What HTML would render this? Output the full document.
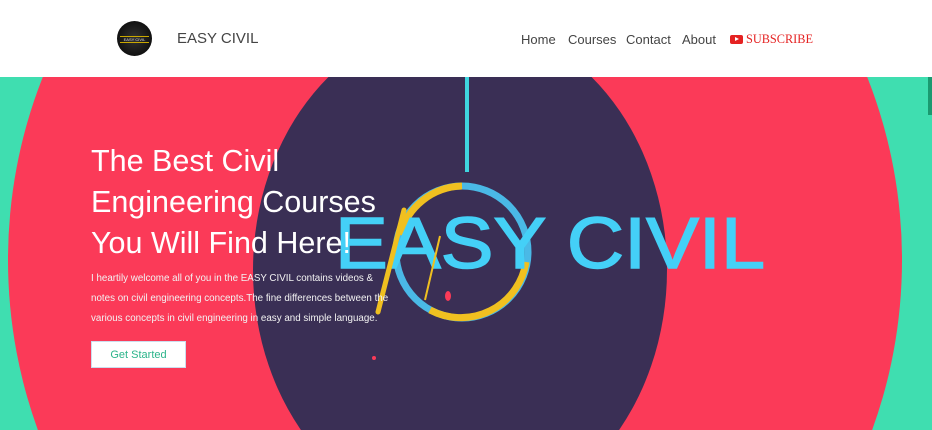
<!DOCTYPE html>
<html style="overflow:hidden"><head><style>
*{margin:0;padding:0;box-sizing:border-box}
html,body{width:932px;height:430px;overflow:hidden}
body{position:relative;background:#3fdeb0;font-family:"Liberation Sans",sans-serif}
.hdr{position:absolute;left:0;top:0;width:932px;height:77px;background:#fff;z-index:5}
.logo{position:absolute;left:117px;top:21px;width:35px;height:35px;border-radius:50%;background:radial-gradient(circle,#333 0,#111 70%);}
.logo span{position:absolute;left:3px;top:15px;font-size:4px;color:#ddd;width:29px;text-align:center;border-top:1px solid #c9a800;border-bottom:1px solid #c9a800}
.brand{position:absolute;left:177px;top:30px;font-size:15px;color:#444}
.nav{position:absolute;top:32px;font-size:13px;color:#444}
.hero{position:absolute;left:0;top:77px;width:932px;height:353px;overflow:hidden}
h1{position:absolute;left:91px;top:64px;font-size:30.5px;line-height:41px;font-weight:normal;color:#fff;z-index:3}
p{position:absolute;left:91px;top:192px;width:305px;font-size:9.8px;line-height:20px;color:#f3f3f3;z-index:3}
.btn{position:absolute;left:91px;top:264px;width:95px;height:27px;background:#fff;border:1px solid #cde;color:#2bb48a;font-size:11px;text-align:center;line-height:26px;z-index:3}
</style></head><body>
<div class="hdr">
<div class="logo"><span>EASY CIVIL</span></div>
<div class="brand">EASY CIVIL</div>
<div class="nav" style="left:521px">Home</div>
<div class="nav" style="left:568px">Courses</div>
<div class="nav" style="left:626px">Contact</div>
<div class="nav" style="left:682px">About</div>
<div class="nav" style="left:730px;top:32px;color:#e52222;font-family:'Liberation Serif',serif;font-size:12.3px"><span style="display:inline-block;width:13px;height:9px;background:#e52222;border-radius:2px;vertical-align:-1px;position:relative;margin-right:3px"><span style="position:absolute;left:5px;top:2px;border-left:4px solid #fff;border-top:2.5px solid transparent;border-bottom:2.5px solid transparent"></span></span>SUBSCRIBE</div>
</div>
<div class="hero">
<svg width="932" height="353" style="position:absolute;left:0;top:0">
<g transform="translate(0,-77)">
<ellipse cx="455" cy="260" rx="447" ry="473" fill="#fb3a58"/>
<ellipse cx="460" cy="270" rx="207" ry="250" fill="#3a2f55"/>
<rect x="465" y="77" width="4" height="95" fill="#3fd6e0"/>
<circle cx="462" cy="252" r="66" fill="none" stroke="#4ab9e6" stroke-width="7"/>
<path d="M462 186 A66 66 0 0 0 400 235" fill="none" stroke="#f0c020" stroke-width="7"/>
<path d="M526 262 A66 66 0 0 1 430 310" fill="none" stroke="#f0c020" stroke-width="7"/>
<text x="335" y="268" font-family="Liberation Sans,sans-serif" font-size="72" fill="#44d0f7" stroke="#44d0f7" stroke-width="1.5" textLength="430" lengthAdjust="spacingAndGlyphs">EASY CIVIL</text>
<line x1="404" y1="210" x2="378" y2="312" stroke="#f0c020" stroke-width="5" stroke-linecap="round"/>
<line x1="440" y1="236" x2="425" y2="300" stroke="#f0c020" stroke-width="2"/>
<ellipse cx="448" cy="296" rx="3" ry="5" fill="#fb3a58"/>
<circle cx="374" cy="358" r="2" fill="#fb3a58"/>
</g>
</svg>
<h1>The Best Civil<br>Engineering Courses<br>You Will Find Here!</h1>
<p>I heartily welcome all of you in the EASY CIVIL contains videos &amp; notes on civil engineering concepts.The fine differences between the various concepts in civil engineering in easy and simple language.</p>
<div class="btn">Get Started</div>
<div style="position:absolute;left:928px;top:0;width:4px;height:38px;background:#1a9a70"></div>
</div>
</body></html>
